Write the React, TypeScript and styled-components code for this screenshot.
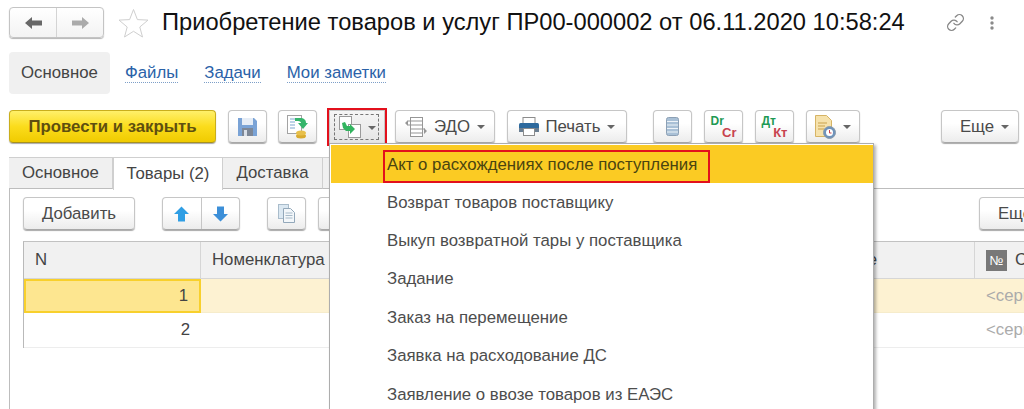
import React from "react";
import styled, { createGlobalStyle } from "styled-components";
import { Link as LinkIcon } from "lucide-react";

const Global = createGlobalStyle`
  html, body { margin: 0; padding: 0; background: #fff; overflow: hidden; }
  body { font-family: "Liberation Sans", Arial, sans-serif; color: #4a4a4a; }
`;

const Page = styled.div`
  position: relative;
  width: 1024px;
  height: 409px;
  overflow: hidden;
  padding: 7px 0 0 9px;
  box-sizing: border-box;
  background: #fff;
`;

const Header = styled.header`
  display: flex;
  align-items: center;
  height: 31px;
`;

const NavGroup = styled.div`
  display: flex;
  width: 95px;
  height: 31px;
  box-sizing: border-box;
  border: 1px solid #c4c4c4;
  border-radius: 4px;
  background: linear-gradient(#ffffff, #f3f3f3);
  box-shadow: 0 1px 1px #b5b5b5;
`;

const NavCell = styled.div<{ $divider?: boolean }>`
  flex: 1;
  display: flex;
  align-items: center;
  justify-content: center;
  border-left: ${(p) => (p.$divider ? "1px solid #d4d4d4" : "none")};
`;

const StarBox = styled.div`
  display: flex;
  margin-left: 14px;
  width: 31px;
`;

const Title = styled.h1`
  margin: 0 0 0 13px;
  font-size: 23.7px;
  font-weight: 400;
  color: #111;
  white-space: nowrap;
  line-height: 31px;
`;

const HeaderTools = styled.div`
  display: flex;
  align-items: center;
  margin-left: 41px;
  gap: 25px;
  color: #888;
`;

const Nav = styled.nav`
  display: flex;
  align-items: center;
  height: 42px;
  margin-top: 14px;
`;

const NavCurrent = styled.div`
  display: flex;
  align-items: center;
  justify-content: center;
  width: 101px;
  height: 42px;
  background: #f0f0f0;
  border-radius: 4px;
  font-size: 16.8px;
  color: #444;
`;

const NavLink = styled.a<{ $ml: number }>`
  margin-left: ${(p) => p.$ml}px;
  font-size: 16.8px;
  line-height: 18px;
  color: #2a62a8;
  border-bottom: 1px dotted #7d9fc8;
`;

const Toolbar = styled.div`
  display: flex;
  align-items: flex-start;
  height: 33px;
  margin-top: 16px;
`;

const Btn = styled.div<{ $w: number; $ml?: number; $h?: number }>`
  display: flex;
  align-items: center;
  justify-content: center;
  gap: 7px;
  flex: none;
  width: ${(p) => p.$w}px;
  height: ${(p) => p.$h ?? 33}px;
  margin-left: ${(p) => p.$ml ?? 0}px;
  box-sizing: border-box;
  border: 1px solid #c6c6c6;
  border-bottom-color: #a8a8a8;
  border-radius: 4px;
  background: linear-gradient(#ffffff 40%, #ececec);
  box-shadow: 0 1px 1px #a9a9a9;
  font-size: 16.8px;
  color: #4a4a4a;
  white-space: nowrap;
`;

const MoreBtn = styled(Btn)`
  padding-left: 9px;
`;

const PrimaryBtn = styled(Btn)`
  border-color: #c9ae1c;
  border-bottom-color: #a8911c;
  background: linear-gradient(#fff06a, #fbdc1c 50%, #f0cb00);
  font-weight: 700;
  color: #5e4f10;
`;

const HotBtn = styled(Btn)`
  position: relative;
  border-radius: 0;
  outline: 2px solid #e3101c;
  outline-offset: 0;
  background: linear-gradient(#f6f6f6, #e4e4e4);
  &::before {
    content: "";
    position: absolute;
    inset: 3px 5px 3px 4px;
    border: 1px dashed #777;
  }
`;

const Caret = styled.span`
  display: inline-block;
  width: 0;
  height: 0;
  margin-top: 1px;
  border-left: 4px solid transparent;
  border-right: 4px solid transparent;
  border-top: 4px solid #666;
`;

const LedgerIcon = styled.div`
  display: grid;
  grid-template-columns: 1fr;
  width: 26px;
  font-weight: 700;
  line-height: 11px;
`;

const LedgerTop = styled.span`
  font-size: 12px;
  color: #1e9a54;
`;

const LedgerBottom = styled.span`
  font-size: 13px;
  color: #c8434e;
  justify-self: end;
`;

const TabStrip = styled.div`
  display: flex;
  align-items: flex-end;
  height: 32px;
  margin-top: 14px;
`;

const Tab = styled.div<{ $w: number; $active?: boolean }>`
  display: flex;
  align-items: center;
  justify-content: center;
  flex: none;
  width: ${(p) => p.$w}px;
  height: ${(p) => (p.$active ? 33 : 32)}px;
  box-sizing: border-box;
  border: 1px solid #cfcfcf;
  border-left-width: ${(p) => (p.$active ? 1 : 0)}px;
  border-bottom: ${(p) => (p.$active ? "none" : "1px solid #bdbdbd")};
  background: ${(p) => (p.$active ? "#fff" : "#f0f0f0")};
  font-size: 16.8px;
  color: #444;
  margin-bottom: ${(p) => (p.$active ? -1 : 0)}px;
`;

const TabStripFill = styled.div`
  flex: 1;
  border-bottom: 1px solid #bdbdbd;
`;

const Panel = styled.div`
  height: 220px;
  box-sizing: border-box;
  padding: 8px 0 0 13px;
  border-left: 1px solid #bdbdbd;
`;

const TableBar = styled.div`
  display: flex;
  height: 33px;
`;

const Split = styled(Btn)`
  gap: 0;
`;

const SplitCell = styled.div<{ $divider?: boolean }>`
  flex: 1;
  height: 100%;
  display: flex;
  align-items: center;
  justify-content: center;
  border-left: ${(p) => (p.$divider ? "1px solid #c6c6c6" : "none")};
`;

const Table = styled.div`
  display: grid;
  grid-template-columns: 177px 567px 207px 100px;
  grid-template-rows: 37px 34px 35px;
  margin-top: 11px;
  width: 1051px;
  border-left: 1px solid #b9b9b9;
  border-top: 1px solid #c2c2c2;
`;

const HeadCell = styled.div`
  display: flex;
  align-items: center;
  gap: 8px;
  padding-left: 11px;
  background: #f1f1f1;
  border-right: 1px solid #d6d6d6;
  border-bottom: 1px solid #d6d6d6;
  font-size: 16.8px;
  color: #444;
`;

const NumberBadge = styled.span`
  display: flex;
  align-items: center;
  justify-content: center;
  width: 21px;
  height: 21px;
  background: #787878;
  color: #fff;
  font-size: 13px;
`;

const RowCell = styled.div<{ $row: number; $current?: boolean; $muted?: boolean; $num?: boolean }>`
  display: flex;
  align-items: center;
  justify-content: ${(p) => (p.$num ? "flex-end" : "flex-start")};
  box-sizing: border-box;
  padding: ${(p) => (p.$num ? "0 11px 0 0" : "0 0 0 11px")};
  background: ${(p) => (p.$current ? "#fde690" : p.$row === 1 ? "#fdf2d2" : "#fff")};
  border: ${(p) => (p.$current ? "2px solid #f8d02c" : "none")};
  border-bottom: ${(p) => (p.$current ? "2px solid #f8d02c" : p.$row === 1 ? "1px solid #f6eccb" : "1px solid #ededed")};
  font-size: 16.8px;
  color: ${(p) => (p.$muted ? "#ababab" : "#444")};
  white-space: nowrap;
`;

const Menu = styled.div`
  position: absolute;
  left: 329px;
  top: 143px;
  width: 542px;
  height: 290px;
  padding: 1px 0 0 1px;
  background: #fff;
  border: 1px solid #adadad;
  box-shadow: 2px 2px 3px rgba(0, 0, 0, 0.3);
`;

const MenuItem = styled.div<{ $active?: boolean }>`
  display: flex;
  align-items: center;
  height: 38.4px;
  box-sizing: border-box;
  padding-left: 56px;
  background: ${(p) => (p.$active ? "#fbcb23" : "transparent")};
  font-size: 16.8px;
  color: #4d4d4d;
  white-space: nowrap;
`;

const MenuMark = styled.span`
  display: flex;
  align-items: center;
  align-self: flex-end;
  box-sizing: border-box;
  height: 33px;
  margin: 0 0 0 -4px;
  padding: 0 11px 4px 2px;
  border: 2px solid #e3101c;
  color: #4a4410;
`;

const Arrow = ({ dir, fill }: { dir: "l" | "r"; fill: string }) => (
  <svg width="19" height="14" viewBox="0 0 19 14">
    <path
      d={dir === "l" ? "M1 7 8 1v3.5h10v5H8V13z" : "M18 7 11 1v3.5H1v5h10V13z"}
      fill={fill}
    />
  </svg>
);

const Star = () => (
  <svg width="31" height="30" viewBox="0 0 31 30">
    <path d="M15.5 1.5 19.4 11.6 30 12.1 21.8 19 24.5 29 15.5 23.3 6.5 29 9.2 19 1 12.1 11.6 11.6z" fill="#fff" stroke="#cfcfcf" />
  </svg>
);

const Dots = () => (
  <svg width="4" height="14" viewBox="0 0 4 14">
    <circle cx="2" cy="2" r="1.7" fill="#8a8a8a" />
    <circle cx="2" cy="7" r="1.7" fill="#8a8a8a" />
    <circle cx="2" cy="12" r="1.7" fill="#8a8a8a" />
  </svg>
);

const SaveIcon = () => (
  <svg width="19" height="19" viewBox="0 0 19 19">
    <path d="M0 1h16l3 3v15H0z" fill="#7aa3d6" />
    <rect x="4" y="1" width="11" height="7" fill="#e6edf6" />
    <rect x="4" y="11" width="11" height="8" fill="#7d8796" />
    <rect x="6" y="13" width="3" height="6" fill="#d9dfe8" />
  </svg>
);

const PostIcon = () => (
  <svg width="21" height="24" viewBox="0 0 21 24">
    <rect x="0.5" y="0.5" width="14" height="18" fill="#fff" stroke="#a3a3a3" />
    <path d="M3 4h6M3 7h5M3 10h5M3 13h5" stroke="#7da6cf" />
    <ellipse cx="14" cy="21" rx="5" ry="2.5" fill="#d9ab2f" />
    <ellipse cx="14" cy="18" rx="5" ry="2.5" fill="#e8c04b" />
    <path d="M8 3h5c4 0 6 2 6 5h2l-5 6-5-6h3c0-1-1-2-3-2H8z" fill="#35b56b" />
  </svg>
);

const BasedOnIcon = () => (
  <svg width="22" height="22" viewBox="0 0 22 22">
    <rect x="0.5" y="0.5" width="12" height="13" fill="#fff" stroke="#9a9a9a" />
    <rect x="9.5" y="8.5" width="12" height="13" fill="#fff" stroke="#9a9a9a" />
    <path d="M3 7l3-1 2 4h3V8l5 5-5 5v-3H7L4 12z" fill="#32b45f" />
  </svg>
);

const EdoIcon = () => (
  <svg width="22" height="22" viewBox="0 0 22 22" fill="none" stroke="#969696">
    <rect x="5.5" y="1.5" width="12" height="19" fill="#fff" />
    <path d="M3 5h15M3 9h15M5 13h15M5 17h13" strokeWidth="1.2" />
    <path d="M0 7l3-3v6zM22 15l-3-3v6z" fill="#969696" stroke="none" />
  </svg>
);

const PrinterIcon = () => (
  <svg width="20" height="19" viewBox="0 0 20 19">
    <rect x="4" y="0.5" width="12" height="7" fill="#fff" stroke="#8c8c8c" />
    <rect x="0" y="6" width="20" height="9" rx="1.5" fill="#2e6a9e" />
    <rect x="0" y="11" width="20" height="4" fill="#6b7f92" />
    <rect x="4.5" y="11.5" width="11" height="7" fill="#fff" stroke="#8c8c8c" />
  </svg>
);

const StackIcon = () => (
  <svg width="13" height="19" viewBox="0 0 13 19">
    <rect x="0.5" y="0.5" width="12" height="18" rx="2" fill="#a9c0d6" stroke="#8ca0b5" />
    <path d="M1 4.5h11M1 8h11M1 11.5h11M1 15h11" stroke="#eef3f8" strokeWidth="1.2" />
  </svg>
);

const ReportIcon = () => (
  <svg width="21" height="24" viewBox="0 0 21 24">
    <path d="M0.5.5h11l5 5v16H.5z" fill="#f6e2ac" stroke="#d6b465" />
    <path d="M3 8h9M3 11h7M3 14h6" stroke="#c9a24c" />
    <circle cx="14.5" cy="17.5" r="6" fill="#6f93bb" stroke="#8b9baa" />
    <circle cx="14.5" cy="17.5" r="3.5" fill="#fff" />
    <path d="M14.5 15v3h2" stroke="#c8434e" fill="none" />
  </svg>
);

const BlueArrow = ({ up }: { up?: boolean }) => (
  <svg width="15" height="16" viewBox="0 0 15 16">
    <path
      d={up ? "M7.5.5 15 8h-4v7.5H4V8H0z" : "M7.5 15.5 15 8h-4V.5H4V8H0z"}
      fill={up ? "#2f9ee4" : "#3c8fd8"}
    />
  </svg>
);

const CopyIcon = () => (
  <svg width="17" height="19" viewBox="0 0 17 19">
    <rect x="0.5" y="0.5" width="10" height="14" fill="#dbe8f2" stroke="#a9bccb" />
    <path d="M5.5 4.5h7l4 4v10h-11z" fill="#f3f7fa" stroke="#93a8ba" />
    <path d="M7.5 9h7M7.5 11.5h7M7.5 14h7" stroke="#a7bac9" />
  </svg>
);

const menuItems = [
  "Возврат товаров поставщику",
  "Выкуп возвратной тары у поставщика",
  "Задание",
  "Заказ на перемещение",
  "Заявка на расходование ДС",
  "Заявление о ввозе товаров из ЕАЭС",
];

export default function App() {
  return (
    <Page>
      <Global />
      <Header>
        <NavGroup>
          <NavCell>
            <Arrow dir="l" fill="#686868" />
          </NavCell>
          <NavCell $divider>
            <Arrow dir="r" fill="#ababab" />
          </NavCell>
        </NavGroup>
        <StarBox>
          <Star />
        </StarBox>
        <Title>Приобретение товаров и услуг ПР00-000002 от 06.11.2020 10:58:24</Title>
        <HeaderTools>
          <LinkIcon size={19} strokeWidth={1.7} />
          <Dots />
        </HeaderTools>
      </Header>

      <Nav>
        <NavCurrent>Основное</NavCurrent>
        <NavLink $ml={15}>Файлы</NavLink>
        <NavLink $ml={26}>Задачи</NavLink>
        <NavLink $ml={26}>Мои заметки</NavLink>
      </Nav>

      <Toolbar>
        <PrimaryBtn $w={207}>Провести и закрыть</PrimaryBtn>
        <Btn $w={39} $ml={12}>
          <SaveIcon />
        </Btn>
        <Btn $w={39} $ml={11}>
          <PostIcon />
        </Btn>
        <HotBtn $w={56} $ml={12} $h={34}>
          <BasedOnIcon />
          <Caret />
        </HotBtn>
        <Btn $w={100} $ml={10}>
          <EdoIcon />
          ЭДО
          <Caret />
        </Btn>
        <Btn $w={120} $ml={12}>
          <PrinterIcon />
          Печать
          <Caret />
        </Btn>
        <Btn $w={39} $ml={26}>
          <StackIcon />
        </Btn>
        <Btn $w={39} $ml={12}>
          <LedgerIcon>
            <LedgerTop>Dr</LedgerTop>
            <LedgerBottom>Cr</LedgerBottom>
          </LedgerIcon>
        </Btn>
        <Btn $w={39} $ml={12}>
          <LedgerIcon>
            <LedgerTop>Дт</LedgerTop>
            <LedgerBottom>Кт</LedgerBottom>
          </LedgerIcon>
        </Btn>
        <Btn $w={54} $ml={12}>
          <ReportIcon />
          <Caret />
        </Btn>
        <MoreBtn $w={78} $ml={81}>
          Еще
          <Caret />
        </MoreBtn>
      </Toolbar>

      <TabStrip>
        <Tab $w={104}>Основное</Tab>
        <Tab $w={110} $active>
          Товары (2)
        </Tab>
        <Tab $w={100}>Доставка</Tab>
        <Tab $w={20} />
        <TabStripFill />
      </TabStrip>

      <Panel>
        <TableBar>
          <Btn $w={112}>Добавить</Btn>
          <Split $w={78} $ml={27}>
            <SplitCell>
              <BlueArrow up />
            </SplitCell>
            <SplitCell $divider>
              <BlueArrow />
            </SplitCell>
          </Split>
          <Btn $w={39} $ml={27}>
            <CopyIcon />
          </Btn>
          <Btn $w={39} $ml={12} />
          <MoreBtn $w={78} $ml={622}>
            Еще
            <Caret />
          </MoreBtn>
        </TableBar>
        <Table>
          <HeadCell>N</HeadCell>
          <HeadCell>Номенклатура</HeadCell>
          <HeadCell>Содержание</HeadCell>
          <HeadCell>
            <NumberBadge>№</NumberBadge>
            Серия
          </HeadCell>
          <RowCell $row={1} $current $num>
            1
          </RowCell>
          <RowCell $row={1} />
          <RowCell $row={1} />
          <RowCell $row={1} $muted>
            &lt;серия&gt;
          </RowCell>
          <RowCell $row={2} $num>
            2
          </RowCell>
          <RowCell $row={2} />
          <RowCell $row={2} />
          <RowCell $row={2} $muted>
            &lt;серия&gt;
          </RowCell>
        </Table>
      </Panel>

      <Menu>
        <MenuItem $active>
          <MenuMark>Акт о расхождениях после поступления</MenuMark>
        </MenuItem>
        {menuItems.map((item) => (
          <MenuItem key={item}>{item}</MenuItem>
        ))}
      </Menu>
    </Page>
  );
}
